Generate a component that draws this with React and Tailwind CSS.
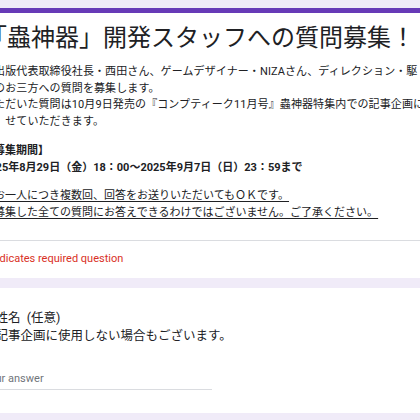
import React from 'react'

/**
 * Google Forms header card + first question, cropped into a 420x420 window
 */
function App() {
  const font = "font-['Roboto','Noto_Sans_CJK_JP',sans-serif]"

  return (
    <div className={`w-[420px] h-[420px] overflow-hidden bg-[#f0ebf8] pt-[8px] text-[#202124] ${font}`}>
      {/* Header card */}
      <div className="-ml-[41px] w-[520px] bg-white border-t-[5px] border-[#673ab7]">
        <div className="pl-[24px] pt-[9px]">
          <h1 className="text-[24px] leading-[32px] whitespace-nowrap font-normal">
            「蟲神器」開発スタッフへの質問募集！
          </h1>

          {/* Description */}
          <div className="mt-[10px] text-[11px] leading-[16.6px] tracking-[0.1px] whitespace-nowrap">
            <p>同出版代表取締役社長・西田さん、ゲームデザイナー・NIZAさん、ディレクション・駆</p>
            <p>んのお三方への質問を募集します。</p>
            <p>いただいた質問は10月9日発売の『コンプティーク11月号』蟲神器特集内での記事企画に</p>
            <p>さ　せていただきます。</p>
          </div>

          <div className="mt-[12.6px] text-[11px] leading-[16.6px] font-bold whitespace-nowrap">
            <p>【募集期間】</p>
            <p>2025年8月29日（金）18：00～2025年9月7日（日）23：59まで</p>
          </div>

          <div className="mt-[11.8px] text-[11px] leading-[16.6px] whitespace-nowrap">
            <p className="underline underline-offset-2">※お一人につき複数回、回答をお送りいただいてもＯＫです。</p>
            <p className="underline underline-offset-2">※募集した全ての質問にお答えできるわけではございません。ご了承ください。</p>
          </div>
        </div>

        <div className="mt-[19px] border-t border-[#dadce0] pl-[24px] pt-[10px] pb-[11px]">
          <p className="text-[11px] leading-[16px] text-[#d93025]">* Indicates required question</p>
        </div>
      </div>

      {/* Question card */}
      <div className="-ml-[41px] w-[520px] mt-[10px] bg-white pl-[24px] pt-[21px] pb-[23px]">
        <p className="text-[12.5px] leading-[18px] whitespace-nowrap">ご姓名&nbsp;&nbsp;(任意)</p>
        <p className="text-[12.5px] leading-[18px] whitespace-nowrap">※記事企画に使用しない場合もございます。</p>
        <div className="mt-[26px] w-[229px] border-b border-[#dadce0] pb-[2px]">
          <p className="text-[11px] leading-[16px] text-[#70757a]">Your answer</p>
        </div>
      </div>
    </div>
  )
}

export default App
